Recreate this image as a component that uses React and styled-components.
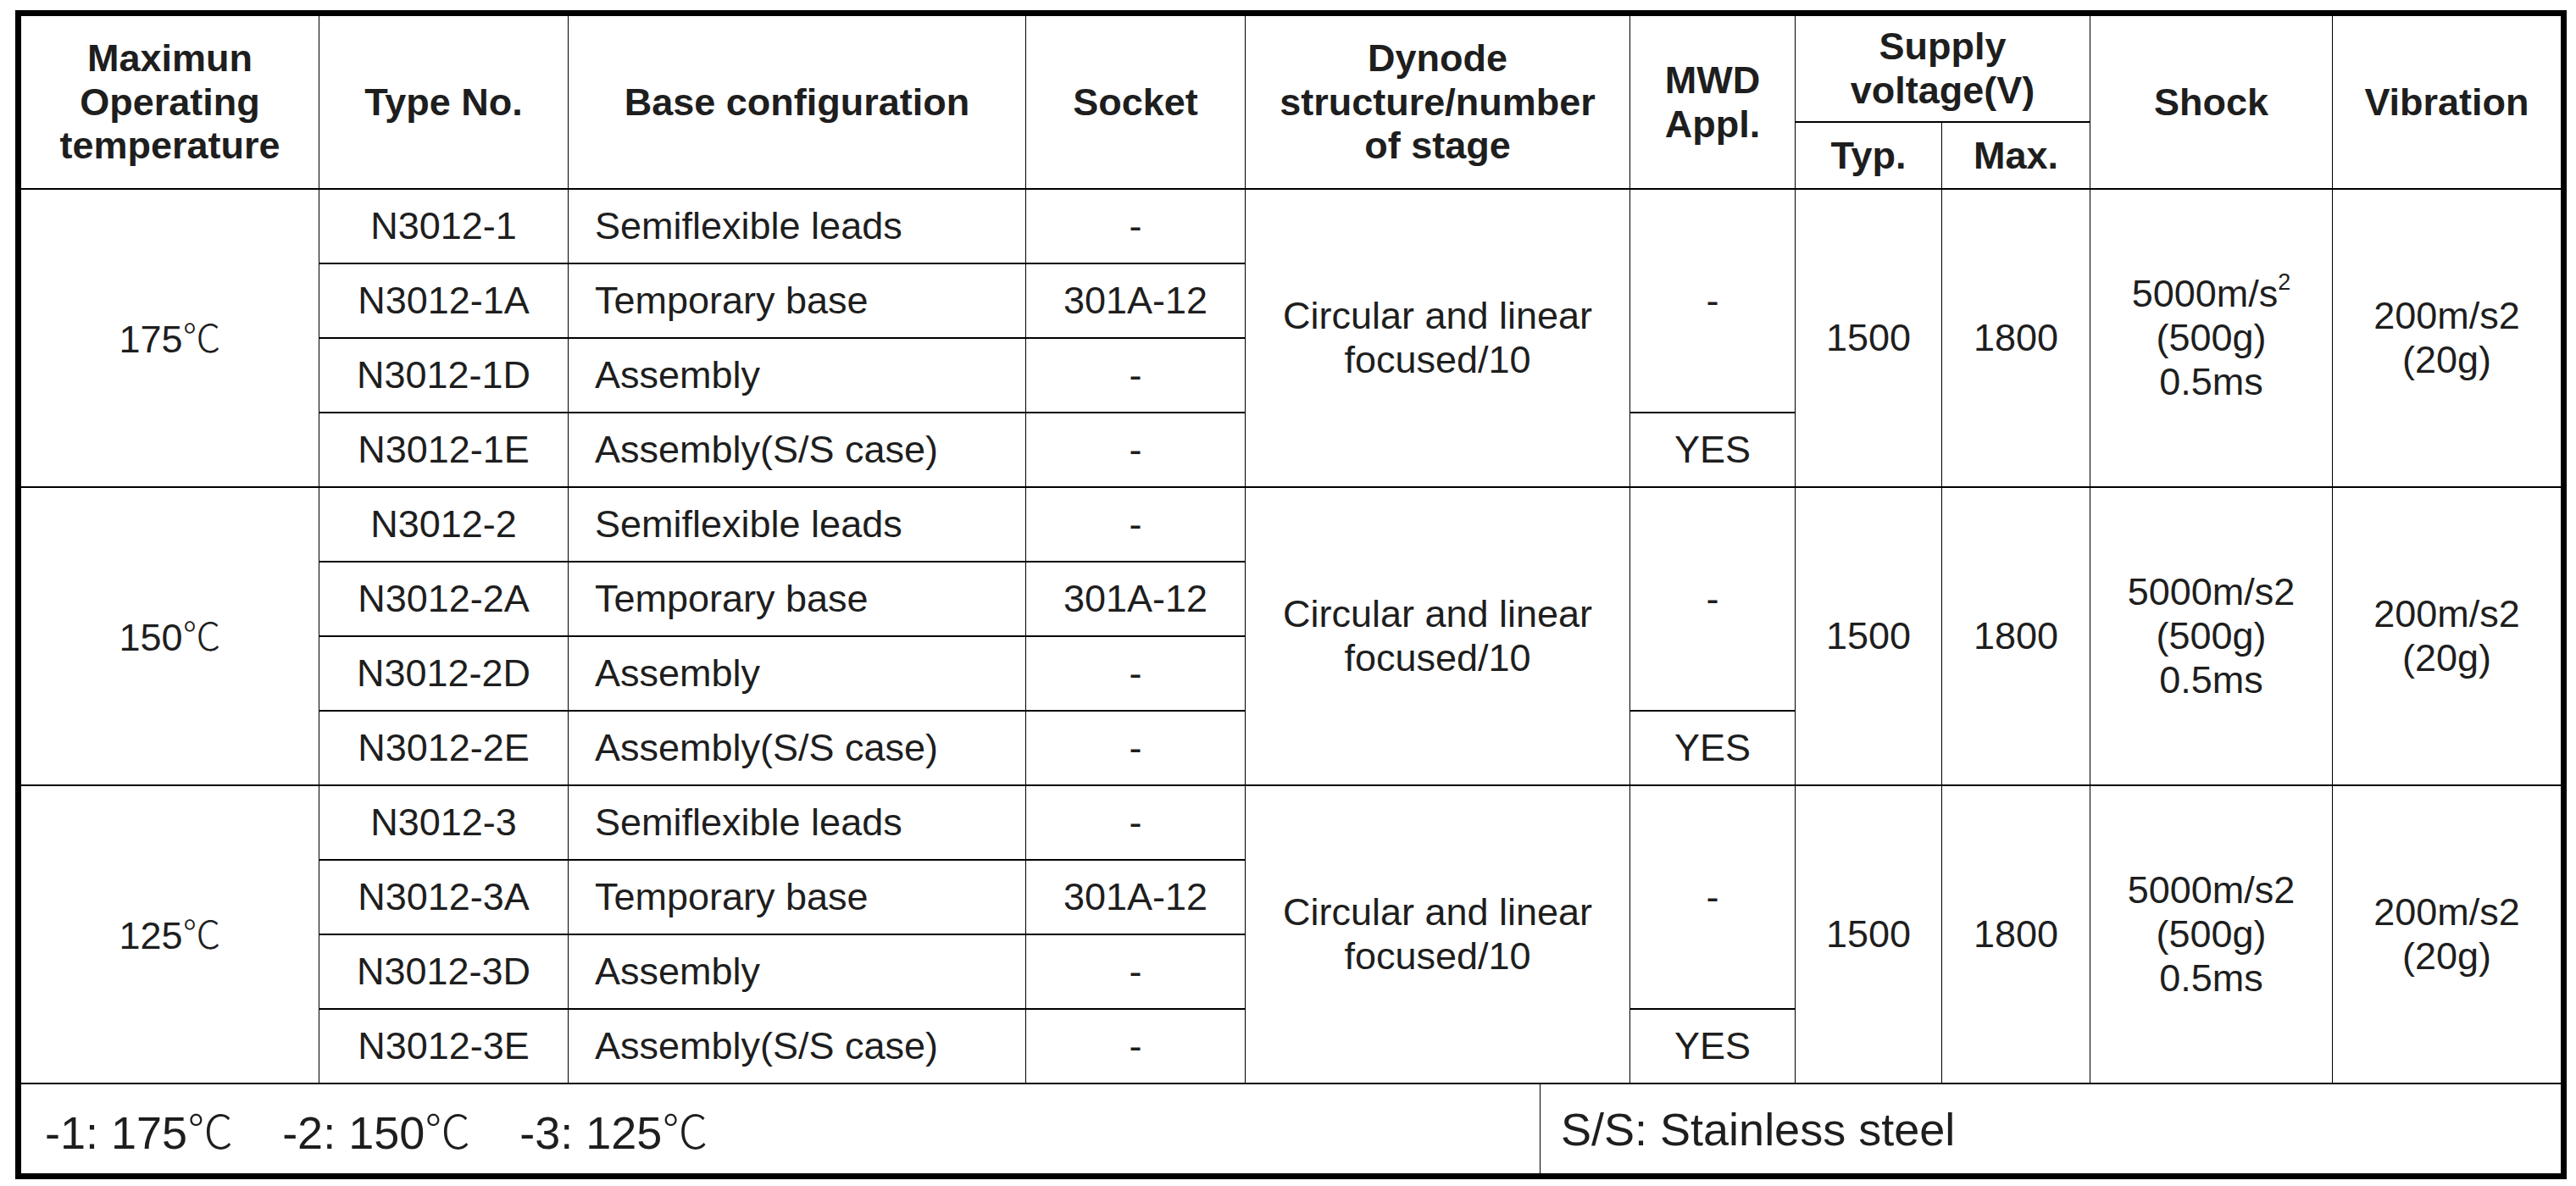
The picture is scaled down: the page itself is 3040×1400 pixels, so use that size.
import React from "react";
import styled, { createGlobalStyle } from "styled-components";

const Global = createGlobalStyle`
  html, body { margin: 0; padding: 0; background: #fff; }
  body { font-family: "Liberation Sans", Arial, "Noto Sans CJK SC", sans-serif; color: #1e1e1e; }
`;

const Frame = styled.div`
  margin: 12px 0 0 18px;
  width: fit-content;
  border: 7px solid #000;
  background: #000;
  display: flex;
  flex-direction: column;
  gap: 2px;
`;

const Grid = styled.div`
  display: grid;
  grid-template-columns: 351px 293px 539px 258px 453px 194px 172px 174px 285px 269px;
  grid-template-rows: 124px 77px repeat(12, 86px);
  row-gap: 2px;
  column-gap: 1px;
  background: #000;
`;

const Cell = styled.div`
  background: #fff;
  grid-column: ${(p) => p.$col} / span ${(p) => p.$cs || 1};
  grid-row: ${(p) => p.$row} / span ${(p) => p.$rs || 1};
  display: flex;
  flex-direction: column;
  justify-content: center;
  align-items: ${(p) => (p.$left ? "flex-start" : "center")};
  padding: ${(p) => (p.$left ? "0 0 0 31px" : "0")};
  text-align: ${(p) => (p.$left ? "left" : "center")};
  font-size: 45px;
  line-height: 1.149;
  font-weight: ${(p) => (p.$bold ? 700 : 400)};
  color: #1e1e1e;
  white-space: nowrap;
`;

const Deg = styled.span`
  font-family: "Noto Sans CJK SC", "DejaVu Sans", sans-serif;
  font-weight: 300;
`;

const Sup = styled.sup`
  font-size: 0.6em;
  line-height: 0;
  vertical-align: 0.75em;
`;

const Footer = styled.div`
  display: grid;
  grid-template-columns: 1792px 1204px;
  column-gap: 1px;
  height: 105px;
`;

const FootCell = styled.div`
  background: #fff;
  display: flex;
  align-items: center;
  gap: 58px;
  padding-left: ${(p) => p.$pad}px;
  font-size: 54px;
  color: #1e1e1e;
  white-space: nowrap;
`;

const Lines = ({ lines }) =>
  lines.map((l, i) => <div key={i}>{l}</div>);

const groups = [
  { temp: "175", suffix: "1", sup: true },
  { temp: "150", suffix: "2", sup: false },
  { temp: "125", suffix: "3", sup: false },
];

const variants = [
  { s: "", base: "Semiflexible leads", socket: "-" },
  { s: "A", base: "Temporary base", socket: "301A-12" },
  { s: "D", base: "Assembly", socket: "-" },
  { s: "E", base: "Assembly(S/S case)", socket: "-" },
];

export default function App() {
  return (
    <>
      <Global />
      <Frame>
        <Grid>
          <Cell $col={1} $row={1} $rs={2} $bold>
            <Lines lines={["Maximun", "Operating", "temperature"]} />
          </Cell>
          <Cell $col={2} $row={1} $rs={2} $bold>Type No.</Cell>
          <Cell $col={3} $row={1} $rs={2} $bold>Base configuration</Cell>
          <Cell $col={4} $row={1} $rs={2} $bold>Socket</Cell>
          <Cell $col={5} $row={1} $rs={2} $bold>
            <Lines lines={["Dynode", "structure/number", "of stage"]} />
          </Cell>
          <Cell $col={6} $row={1} $rs={2} $bold>
            <Lines lines={["MWD", "Appl."]} />
          </Cell>
          <Cell $col={7} $row={1} $cs={2} $bold>
            <Lines lines={["Supply", "voltage(V)"]} />
          </Cell>
          <Cell $col={7} $row={2} $bold>Typ.</Cell>
          <Cell $col={8} $row={2} $bold>Max.</Cell>
          <Cell $col={9} $row={1} $rs={2} $bold>Shock</Cell>
          <Cell $col={10} $row={1} $rs={2} $bold>Vibration</Cell>

          {groups.map((g, gi) => {
            const r = 3 + gi * 4;
            return (
              <React.Fragment key={g.temp}>
                <Cell $col={1} $row={r} $rs={4}>
                  <div>
                    {g.temp}
                    <Deg>℃</Deg>
                  </div>
                </Cell>
                {variants.map((v, vi) => (
                  <React.Fragment key={v.s}>
                    <Cell $col={2} $row={r + vi}>{`N3012-${g.suffix}${v.s}`}</Cell>
                    <Cell $col={3} $row={r + vi} $left>{v.base}</Cell>
                    <Cell $col={4} $row={r + vi}>{v.socket}</Cell>
                  </React.Fragment>
                ))}
                <Cell $col={5} $row={r} $rs={4}>
                  <Lines lines={["Circular and linear", "focused/10"]} />
                </Cell>
                <Cell $col={6} $row={r} $rs={3}>-</Cell>
                <Cell $col={6} $row={r + 3}>YES</Cell>
                <Cell $col={7} $row={r} $rs={4}>1500</Cell>
                <Cell $col={8} $row={r} $rs={4}>1800</Cell>
                <Cell $col={9} $row={r} $rs={4}>
                  <div>
                    5000m/s{g.sup ? <Sup>2</Sup> : "2"}
                  </div>
                  <div>(500g)</div>
                  <div>0.5ms</div>
                </Cell>
                <Cell $col={10} $row={r} $rs={4}>
                  <Lines lines={["200m/s2", "(20g)"]} />
                </Cell>
              </React.Fragment>
            );
          })}
        </Grid>
        <Footer>
          <FootCell $pad={28}>
            <span>-1: 175<Deg>℃</Deg></span>
            <span>-2: 150<Deg>℃</Deg></span>
            <span>-3: 125<Deg>℃</Deg></span>
          </FootCell>
          <FootCell $pad={24}>S/S: Stainless steel</FootCell>
        </Footer>
      </Frame>
    </>
  );
}
